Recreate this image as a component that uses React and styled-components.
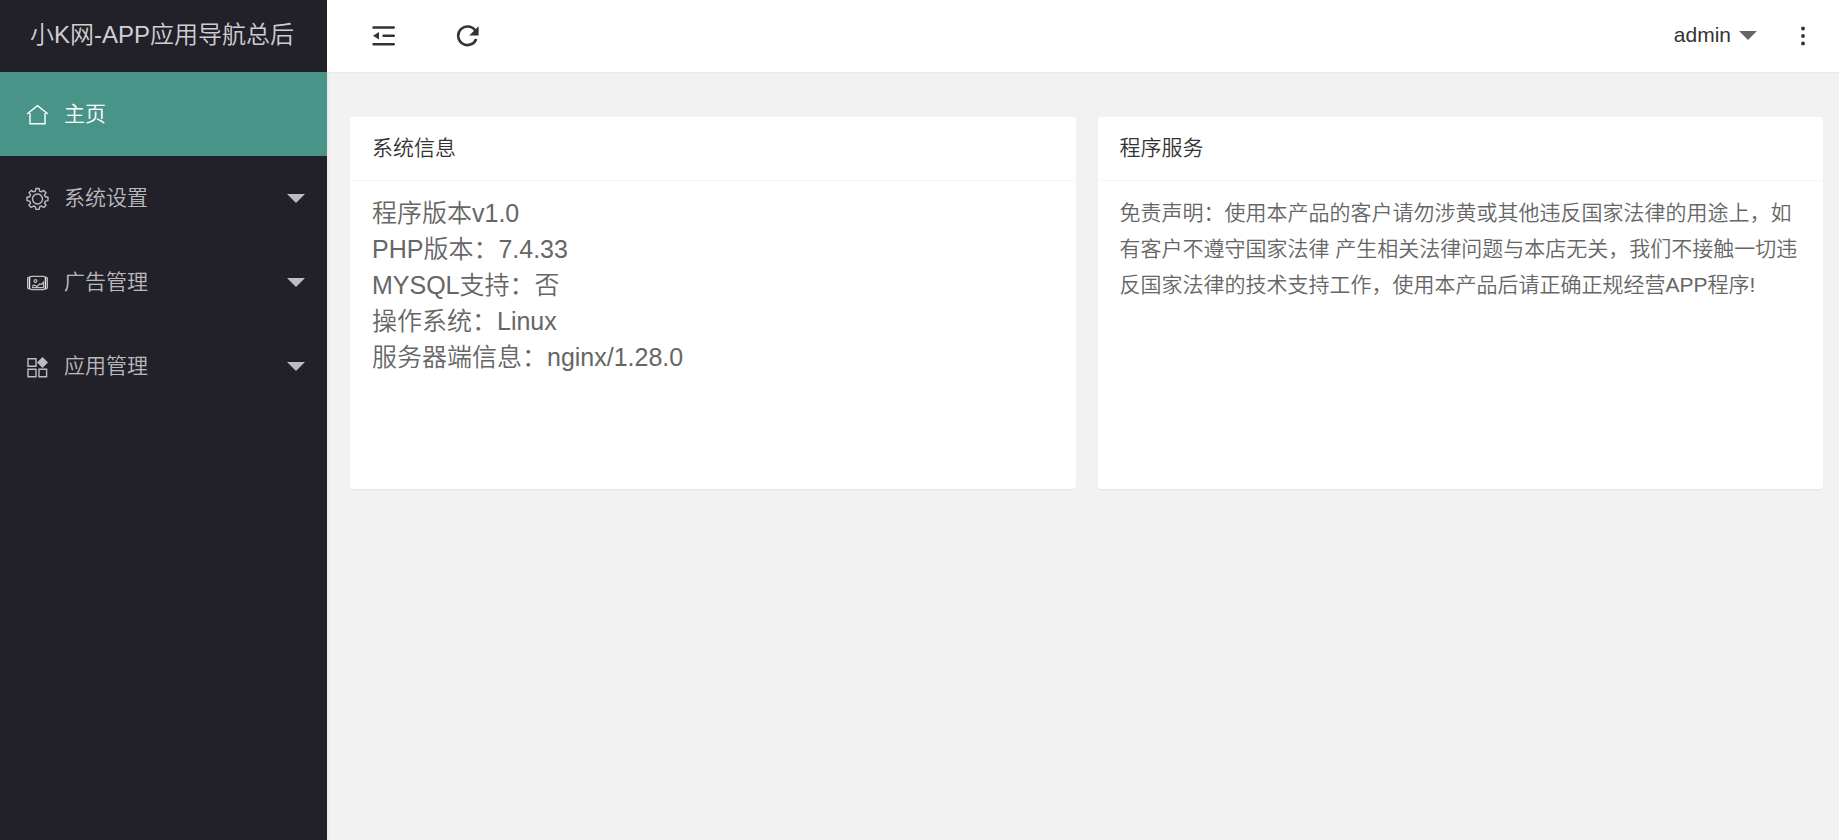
import React, { useState } from "react";
import styled, { createGlobalStyle } from "styled-components";

const GlobalStyle = createGlobalStyle`
* {
box-sizing: border-box;
}
body {
margin: 0;
background-color: #f2f2f2;
color: #333;
font-family: "Liberation Sans", "Noto Sans CJK SC", sans-serif;
font-size: 21px;
font-weight: 350;
line-height: 36px;
}
button {
padding: 0;
border: 0;
background: none;
color: inherit;
font: inherit;
cursor: pointer;
}
a {
color: inherit;
text-decoration: none;
}
ul {
margin: 0;
padding: 0;
list-style: none;
}
`

const Layout = styled.div`
display: flex;
min-height: 100vh;
`

const Sidebar = styled.aside`
flex: 0 0 327px;
background-color: #222129;
color: rgba(255, 255, 255, 0.7);
box-shadow: 1px 0 2px 0 rgba(0, 0, 0, 0.05);
`

const Logo = styled.a`
display: block;
height: 72px;
padding: 0 30px;
overflow: hidden;
color: rgba(255, 255, 255, 0.8);
font-size: 24px;
line-height: 70px;
white-space: nowrap;
box-shadow: 0 1px 2px 0 rgba(0, 0, 0, 0.15);
`

const MenuLink = styled.a`
display: flex;
align-items: center;
gap: 15px;
height: 84px;
padding: 0 22px 0 26px;
background-color: ${(props) => (props.$active ? "#499488" : "transparent")};
color: ${(props) => (props.$active ? "#fff" : "inherit")};
`

const MenuText = styled.span`
flex: 1;
`

const MenuIcon = styled.svg`
width: 23px;
height: 24px;
fill: none;
stroke: currentColor;
stroke-width: 1.4;
`

const Caret = styled.span`
border: 9px solid transparent;
border-top-color: currentColor;
border-bottom-width: 0;
`

const Main = styled.div`
flex: 1;
min-width: 0;
`

const Header = styled.header`
display: flex;
align-items: center;
justify-content: space-between;
height: 72px;
padding: 0 24px 2px 44px;
background-color: #fff;
box-shadow: 0 1px 2px 0 rgba(0, 0, 0, 0.05);
`

const HeaderGroup = styled.div`
display: flex;
align-items: center;
gap: ${(props) => props.$gap};
`

const IconButton = styled.button`
display: flex;
`

const HeaderIcon = styled.svg`
width: 24px;
height: 24px;
`

const UserButton = styled.button`
display: flex;
align-items: center;
gap: 8px;
color: #333;
`

const UserCaret = styled(Caret)`
color: #666;
`

const Content = styled.main`
display: grid;
grid-template-columns: 1fr 1fr;
gap: 22px;
padding: 45px 16px 45px 23px;
`

const Card = styled.section`
min-height: 372px;
border-radius: 3px;
background-color: #fff;
box-shadow: 0 1px 2px 0 rgba(0, 0, 0, 0.05);
`

const CardTitle = styled.h2`
height: 64px;
margin: 0;
padding: 0 22px;
border-bottom: 1px solid #f6f6f6;
color: #333;
font-size: 21px;
font-weight: 350;
line-height: 62px;
`

const CardBody = styled.div`
padding: 14px 22px;
color: #666;
`

const InfoList = styled.ul`
font-size: 25px;
`

const Notice = styled.p`
margin: 0;
`

const HomeIcon = () => (
  <MenuIcon viewBox="0 0 23 24">
    <path d="M1 12L11.5 3.7L22 12M4 11V21.7H19V11" />
  </MenuIcon>
)

const GearIcon = () => (
  <MenuIcon viewBox="0 0 23 24">
    <path
      strokeLinejoin="round"
      d="M9.9 2.5H13.1L13.6 5.1L15.5 5.9L17.7 4.4L20 6.7L18.5 8.9L19.3 10.8L22 11.3V14.6L19.3 15.1L18.5 17L20 19.2L17.7 21.5L15.5 20L13.6 20.8L13.1 23.4H9.9L9.4 20.8L7.5 20L5.3 21.5L3 19.2L4.5 17L3.7 15.1L1 14.6V11.3L3.7 10.8L4.5 8.9L3 6.7L5.3 4.4L7.5 5.9L9.4 5.1Z"
    />
    <circle cx="11.5" cy="13" r="5" />
  </MenuIcon>
)

const PictureIcon = () => (
  <MenuIcon viewBox="0 0 23 24">
    <path fill="currentColor" fillOpacity="0.5" strokeWidth="0.9" d="M3.6 7H2.2L1.5 8V18L2.2 19H3.6ZM19.4 7H20.8L21.5 8V18L20.8 19H19.4Z" />
    <rect x="3.6" y="6.4" width="15.8" height="13.2" rx="2" strokeWidth="1.2" />
    <circle cx="9.5" cy="11" r="1.4" strokeWidth="1.2" />
    <path strokeWidth="1.2" d="M6 16.5L8 15L11 16.5L13.6 14L15.5 14.3L17.5 12V17.6H6" />
  </MenuIcon>
)

const AppIcon = () => (
  <MenuIcon viewBox="0 0 23 24">
    <path d="M2 4.7H10V12.2H2ZM2 15.2H10V22.7H2ZM13 15.2H20.6V22.7H13Z" />
    <path fill="currentColor" stroke="none" d="M16.5 3L22 8.5L16.5 14L11 8.5Z" />
  </MenuIcon>
)

const menu = [
  { title: "主页", Icon: HomeIcon },
  { title: "系统设置", Icon: GearIcon, hasChildren: true },
  { title: "广告管理", Icon: PictureIcon, hasChildren: true },
  { title: "应用管理", Icon: AppIcon, hasChildren: true },
]

const info = [
  "程序版本v1.0",
  "PHP版本：7.4.33",
  "MYSQL支持：否",
  "操作系统：Linux",
  "服务器端信息：nginx/1.28.0",
]

const App = () => {

  const [active, setActive] = useState("主页")

  return (
    <>
      <GlobalStyle />
      <Layout>
        <Sidebar>
          <Logo href="#">小K网-APP应用导航总后</Logo>
          <nav>
            <ul>
              {menu.map(({ title, Icon, hasChildren }) => (
                <li key={title}>
                  <MenuLink href="#" $active={active === title} onClick={() => setActive(title)}>
                    <Icon />
                    <MenuText>{title}</MenuText>
                    {hasChildren && <Caret />}
                  </MenuLink>
                </li>
              ))}
            </ul>
          </nav>
        </Sidebar>
        <Main>
          <Header>
            <HeaderGroup $gap="60px">
              <IconButton aria-label="侧边伸缩">
                <HeaderIcon viewBox="0 0 24 24">
                  <path fill="none" stroke="#333" strokeWidth="2.6" strokeLinecap="round" d="M2.6 4.5H22.7M12.6 12.7H22.7M2.6 21.2H22.7" />
                  <path fill="#333" d="M2 12.7L8 9V16.4Z" />
                </HeaderIcon>
              </IconButton>
              <IconButton aria-label="刷新">
                <HeaderIcon viewBox="0 0 24 24">
                  <path fill="none" stroke="#333" strokeWidth="2.6" d="M20.6 8.2A9.3 9.3 0 1 0 21.2 16" />
                  <path fill="#333" d="M23.6 3.2V12.4H14.2Z" />
                </HeaderIcon>
              </IconButton>
            </HeaderGroup>
            <HeaderGroup $gap="34px">
              <UserButton>
                admin
                <UserCaret />
              </UserButton>
              <IconButton aria-label="更多">
                <HeaderIcon viewBox="0 0 24 24" fill="#333">
                  <circle cx="12" cy="5.5" r="1.9" />
                  <circle cx="12" cy="13" r="1.9" />
                  <circle cx="12" cy="20.5" r="1.9" />
                </HeaderIcon>
              </IconButton>
            </HeaderGroup>
          </Header>
          <Content>
            <Card>
              <CardTitle>系统信息</CardTitle>
              <CardBody>
                <InfoList>
                  {info.map((line) => <li key={line}>{line}</li>)}
                </InfoList>
              </CardBody>
            </Card>
            <Card>
              <CardTitle>程序服务</CardTitle>
              <CardBody>
                <Notice>
                  免责声明：使用本产品的客户请勿涉黄或其他违反国家法律的用途上，如有客户不遵守国家法律 产生相关法律问题与本店无关，我们不接触一切违反国家法律的技术支持工作，使用本产品后请正确正规经营APP程序!
                </Notice>
              </CardBody>
            </Card>
          </Content>
        </Main>
      </Layout>
    </>
  )

}
export default App
